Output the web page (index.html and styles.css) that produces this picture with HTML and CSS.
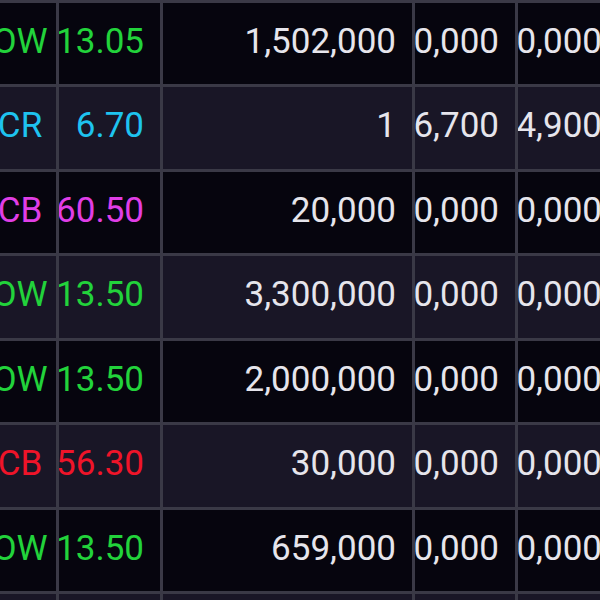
FILE: index.html
```html
<!DOCTYPE html>
<html lang="en">
<head>
  <meta charset="UTF-8" />
  <title>Price board</title>
  <link rel="stylesheet" href="styles.css">
</head>
<body>
  <!-- board is scrolled a little to the right, so the symbol column is cut -->
  <div class="board">
    <!-- row 1 -->
    <div class="cell sym up">POW</div>
    <div class="cell up">13.05</div>
    <div class="cell">1,502,000</div>
    <div class="cell">10,000</div>
    <div class="cell">10,000</div>

    <!-- row 2 -->
    <div class="cell sym alt ref">VCR</div>
    <div class="cell alt ref">6.70</div>
    <div class="cell alt">1</div>
    <div class="cell alt">6,700</div>
    <div class="cell alt">4,900</div>

    <!-- row 3 -->
    <div class="cell sym ceil">VCB</div>
    <div class="cell ceil">160.50</div>
    <div class="cell">20,000</div>
    <div class="cell">10,000</div>
    <div class="cell">10,000</div>

    <!-- row 4 -->
    <div class="cell sym alt up">POW</div>
    <div class="cell alt up">13.50</div>
    <div class="cell alt">3,300,000</div>
    <div class="cell alt">10,000</div>
    <div class="cell alt">10,000</div>

    <!-- row 5 -->
    <div class="cell sym up">POW</div>
    <div class="cell up">13.50</div>
    <div class="cell">2,000,000</div>
    <div class="cell">10,000</div>
    <div class="cell">10,000</div>

    <!-- row 6 -->
    <div class="cell sym alt down">VCB</div>
    <div class="cell alt down">56.30</div>
    <div class="cell alt">30,000</div>
    <div class="cell alt">10,000</div>
    <div class="cell alt">10,000</div>

    <!-- row 7 -->
    <div class="cell sym up">POW</div>
    <div class="cell up">13.50</div>
    <div class="cell">659,000</div>
    <div class="cell">10,000</div>
    <div class="cell">10,000</div>

    <!-- row 8 -->
    <div class="cell sym alt up">POW</div>
    <div class="cell alt up">13.50</div>
    <div class="cell alt">500,000</div>
    <div class="cell alt">10,000</div>
    <div class="cell alt">10,000</div>
  </div>
</body>
</html>
```

FILE: styles.css
```css
body {
  margin: 0;
  background: #06050e;
  overflow: hidden;
  font-family: Roboto, "Liberation Sans", sans-serif;
}
.board {
  display: grid;
  grid-template-columns: 94px 101px 249px 100px 100px;
  grid-auto-rows: 81.5px;
  gap: 3px;
  padding-top: 2.5px;
  margin-left: -38px;
  width: 656px;
  background: #3a3946;
}
.cell {
  display: flex;
  align-items: center;
  justify-content: flex-end;
  overflow: hidden;
  white-space: nowrap;
  padding: 0 16px 4px 0;
  background: #06050e;
  color: #e6e5ec;
  font-size: 35px;
}
.cell.alt {
  background: #191626;
}
.cell.sym {
  justify-content: center;
  padding-right: 0;
}
.up {
  color: #22d33b;
}
.ref {
  color: #1ec3ef;
}
.ceil {
  color: #e03ee6;
}
.down {
  color: #ef1429;
}
```
